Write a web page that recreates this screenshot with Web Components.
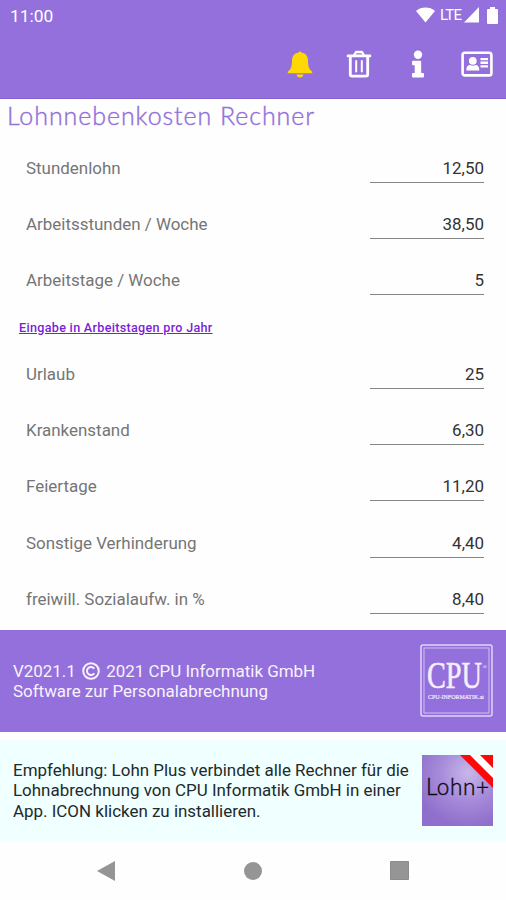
<!DOCTYPE html>
<html lang="de">
<head>
<meta charset="utf-8">
<title>Lohnnebenkosten Rechner</title>
<style>
  body {
    margin: 0;
    background: #fefefe;
    font-family: Roboto, "Liberation Sans", sans-serif;
  }
</style>
</head>
<body>
<calc-app></calc-app>

<script>
class StatusBar extends HTMLElement {
  connectedCallback() {
    this.attachShadow({ mode: 'open' });
    this.shadowRoot.innerHTML = `
      <style>
        :host {
          display: flex;
          justify-content: space-between;
          height: 32px;
          padding: 0 8px 0 10px;
          box-sizing: border-box;
          color: #fff;
        }
        .time {
          font-size: 17.4px;
          line-height: 32px;
        }
        .icons {
          display: flex;
          align-items: center;
          height: 30px;
        }
        .net {
          font-size: 15px;
          line-height: 30px;
          width: 24px;
          margin-left: 5px;
          letter-spacing: -0.7px;
        }
        .battery {
          margin-left: 8px;
        }
      </style>
      <span class="time"><slot></slot></span>
      <div class="icons">
        <svg width="19" height="16" viewBox="0 0 19 16"><path fill="#fff" d="M0 4C5-.6 14-.6 19 4L9.500 15.500z"/></svg>
        <span class="net">LTE</span>
        <svg width="15" height="16" viewBox="0 0 15 16"><path fill="#fff" d="M15 0v15.500H0z"/></svg>
        <svg class="battery" width="11" height="17" viewBox="0 0 11 17"><path fill="#fff" d="M3 0h5v2h2q1 0 1 1v13q0 1-1 1H1q-1 0-1-1V3q0-1 1-1h2z"/></svg>
      </div>
    `;
  }
}
customElements.define('status-bar', StatusBar);

class ToolBar extends HTMLElement {
  connectedCallback() {
    this.attachShadow({ mode: 'open' });
    this.shadowRoot.innerHTML = `
      <style>
        :host {
          display: grid;
          grid-template-columns: repeat(4, 59px);
          justify-content: end;
          align-items: center;
          height: 64px;
        }
        svg {
          display: block;
          margin: 0 auto;
        }
      </style>
      <svg width="26" height="28" viewBox="0 0 26 28">
        <path fill="#ffd800" d="M11.500 2.500a1.600 1.600 0 0 1 3 0C19 3.200 21 6.500 21 11c0 6 1.500 8.500 4 10.500.7.800.2 1.800-.8 1.800H1.800c-1 0-1.500-1-.8-1.800C3.500 19.500 5 17 5 11c0-4.500 2-7.800 6.500-8.500zM9.500 24.500h7c-.4 2-1.700 3-3.500 3s-3.100-1-3.500-3z"/>
      </svg>
      <svg width="26" height="28" viewBox="0 0 26 28" fill="none" stroke="#fff">
        <path stroke-width="2.600" stroke-linecap="round" d="M2 5.900h22"/>
        <path stroke-width="2.400" stroke-linejoin="round" d="M8 5.500l2-3.500h6l2 3.500"/>
        <path stroke-width="2.800" d="M4.300 7v17.200q0 1.900 1.900 1.900h13.600q1.900 0 1.900-1.900V7"/>
        <path stroke-width="2" stroke-linecap="round" d="M10.200 11v10.500M15.800 11v10.500"/>
      </svg>
      <svg width="14" height="28" viewBox="0 0 14 28" fill="#fff">
        <circle cx="7" cy="4.700" r="4.200"/>
        <path d="M2 10.800h7.200q1 0 1 1V23H12q1 0 1 1v2.500q0 1-1 1H2q-1 0-1-1V24q0-1 1-1h1.700v-7.700H2q-1 0-1-1v-2.500q0-1 1-1z"/>
      </svg>
      <svg width="32" height="26" viewBox="0 0 32 26">
        <rect x="1.600" y="1.800" width="28.800" height="22.600" rx="2.200" fill="none" stroke="#fff" stroke-width="2.600"/>
        <g fill="#fff">
          <circle cx="11.800" cy="9.800" r="3.900"/>
          <path d="M5.300 19.500c0-3.700 1.500-5.500 3.800-5.500 1.700.9 3.700.9 5.400 0 2.300 0 3.800 1.800 3.800 5.500z"/>
          <path d="M19.500 7h7.500v2.300h-7.500zM19.500 10.600h7.500v2.300h-7.500zM19.500 14.200h7.500v2.300h-7.500z"/>
        </g>
      </svg>
    `;
  }
}
customElements.define('tool-bar', ToolBar);

class FieldRow extends HTMLElement {
  connectedCallback() {
    this.attachShadow({ mode: 'open' });
    this.shadowRoot.innerHTML = `
      <style>
        :host {
          display: flex;
          justify-content: space-between;
          align-items: flex-start;
          height: 56.2px;
          padding: 15px 22px 0 26px;
          box-sizing: border-box;
          font-size: 16.95px;
          line-height: 27px;
        }
        .label {
          color: #757575;
        }
        .value {
          width: 114px;
          height: 27px;
          border-bottom: 1px solid #858585;
          text-align: right;
          color: #333;
        }
      </style>
      <span class="label"><slot></slot></span>
      <div class="value">${this.getAttribute('value')}</div>
    `;
  }
}
customElements.define('field-row', FieldRow);

class CpuLogo extends HTMLElement {
  connectedCallback() {
    this.attachShadow({ mode: 'open' });
    this.shadowRoot.innerHTML = `
      <style>
        :host {
          display: block;
        }
        svg {
          display: block;
          overflow: visible;
        }
      </style>
      <svg width="73" height="74" viewBox="0 0 73 74" fill="#f6edff" font-family="Liberation Serif, serif">
        <rect x="1" y="1" width="71" height="71" rx="2" fill="none" stroke="#e3d3fa" stroke-width="1.500"/>
        <rect x="4" y="4" width="65" height="65" fill="none" stroke="#d3bff5"/>
        <text x="7" y="43.500" font-size="38" stroke="#f6edff" stroke-width="0.600" textLength="55" lengthAdjust="spacingAndGlyphs">CPU</text>
        <text x="62.500" y="25" font-size="6">®</text>
        <text x="8" y="55" font-size="6.500" stroke="#f6edff" stroke-width="0.200" textLength="56" lengthAdjust="spacingAndGlyphs">CPU-INFORMATIK.at</text>
      </svg>
    `;
  }
}
customElements.define('cpu-logo', CpuLogo);

class LohnLogo extends HTMLElement {
  connectedCallback() {
    this.attachShadow({ mode: 'open' });
    this.shadowRoot.innerHTML = `
      <style>
        :host {
          display: block;
        }
        svg {
          display: block;
        }
      </style>
      <svg width="71" height="71" viewBox="0 0 71 71">
        <defs>
          <radialGradient id="shine" gradientUnits="userSpaceOnUse" cx="46" cy="18" r="54">
            <stop offset="0" stop-color="#c8b7ea"/>
            <stop offset="0.500" stop-color="#a78cda"/>
            <stop offset="1" stop-color="#8f6fcb"/>
          </radialGradient>
        </defs>
        <path fill="url(#shine)" d="M0 0h71v71H0z"/>
        <path fill="#fff" d="M46 0h13l12 13v13z"/>
        <path fill="#fa0a0a" d="M38 0h10l23 23v10zM58 0h13v13z"/>
        <text x="4" y="40" font-family="Lato, sans-serif" font-weight="300" font-size="22.500" fill="#0c0812" stroke="#0c0812" stroke-width="0.400" textLength="63">Lohn+</text>
      </svg>
    `;
  }
}
customElements.define('lohn-logo', LohnLogo);

class InfoPanel extends HTMLElement {
  connectedCallback() {
    this.attachShadow({ mode: 'open' });
    this.shadowRoot.innerHTML = `
      <style>
        :host {
          display: flex;
          justify-content: space-between;
          align-items: center;
          padding: 0 13px;
          box-sizing: border-box;
          font-size: 16.95px;
          line-height: 20.4px;
          white-space: nowrap;
        }
      </style>
      <div><slot></slot></div>
      <slot name="logo"></slot>
    `;
  }
}
customElements.define('info-panel', InfoPanel);

class NavBar extends HTMLElement {
  connectedCallback() {
    this.attachShadow({ mode: 'open' });
    this.shadowRoot.innerHTML = `
      <style>
        :host {
          display: flex;
          justify-content: space-between;
          align-items: center;
          height: 59px;
          padding: 0 97px;
          box-sizing: border-box;
        }
      </style>
      <svg width="18" height="20" viewBox="0 0 18 20"><path fill="#959595" d="M0 10L18 0v20z"/></svg>
      <svg width="18" height="18" viewBox="0 0 18 18"><circle cx="9" cy="9" r="9" fill="#959595"/></svg>
      <svg width="19" height="19" viewBox="0 0 19 19"><path fill="#959595" stroke="#8c8c8c" d="M.5.500h18v18H.5z"/></svg>
    `;
  }
}
customElements.define('nav-bar', NavBar);

class CalcApp extends HTMLElement {
  connectedCallback() {
    this.attachShadow({ mode: 'open' });
    this.shadowRoot.innerHTML = `
      <style>
        :host {
          display: flex;
          flex-direction: column;
          width: 506px;
          height: 900px;
          overflow: hidden;
        }
        header {
          height: 99px;
          background: #9370db;
          border-bottom: 1px solid #8560cf;
          box-sizing: border-box;
        }
        h1 {
          height: 41px;
          margin: 0;
          padding-left: 7px;
          font-family: Lato, sans-serif;
          font-weight: 300;
          font-size: 25px;
          line-height: 33px;
          letter-spacing: 0.93px;
          color: #9370db;
          -webkit-text-stroke: 0.4px #9370db;
        }
        .mode {
          display: block;
          height: 37.4px;
          padding-left: 19px;
          font-size: 12.6px;
          line-height: 38px;
          font-weight: 500;
          letter-spacing: 0.3px;
          color: #7a1fd8;
          text-decoration: underline;
        }
        .about {
          height: 102px;
          margin-top: auto;
          background: #9370db;
          color: #f8f2ff;
        }
        .about svg {
          vertical-align: -3px;
          margin: 0 2px;
        }
        .promo {
          height: 101px;
          margin-top: 8px;
          background: #f0ffff;
          color: #222a2a;
        }
      </style>
      <header>
        <status-bar>11:00</status-bar>
        <tool-bar></tool-bar>
      </header>
      <h1>Lohnnebenkosten Rechner</h1>
      <field-row value="12,50">Stundenlohn</field-row>
      <field-row value="38,50">Arbeitsstunden / Woche</field-row>
      <field-row value="5">Arbeitstage / Woche</field-row>
      <a class="mode">Eingabe in Arbeitstagen pro Jahr</a>
      <field-row value="25">Urlaub</field-row>
      <field-row value="6,30">Krankenstand</field-row>
      <field-row value="11,20">Feiertage</field-row>
      <field-row value="4,40">Sonstige Verhinderung</field-row>
      <field-row value="8,40">freiwill. Sozialaufw. in %</field-row>
      <info-panel class="about">
        V2021.1 <svg width="18" height="18" viewBox="0 0 18 18" fill="none" stroke="#f8f2ff" stroke-width="2"><circle cx="9" cy="9" r="7.800"/><path d="M12.300 6.800a4 4 0 1 0 0 4.400"/></svg> 2021 CPU Informatik GmbH<br>
        Software zur Personalabrechnung
        <cpu-logo slot="logo"></cpu-logo>
      </info-panel>
      <info-panel class="promo">
        Empfehlung: Lohn Plus verbindet alle Rechner für die<br>
        Lohnabrechnung von CPU Informatik GmbH in einer<br>
        App. ICON klicken zu installieren.
        <lohn-logo slot="logo"></lohn-logo>
      </info-panel>
      <nav-bar></nav-bar>
    `;
  }
}
customElements.define('calc-app', CalcApp);
</script>
</body>
</html>
